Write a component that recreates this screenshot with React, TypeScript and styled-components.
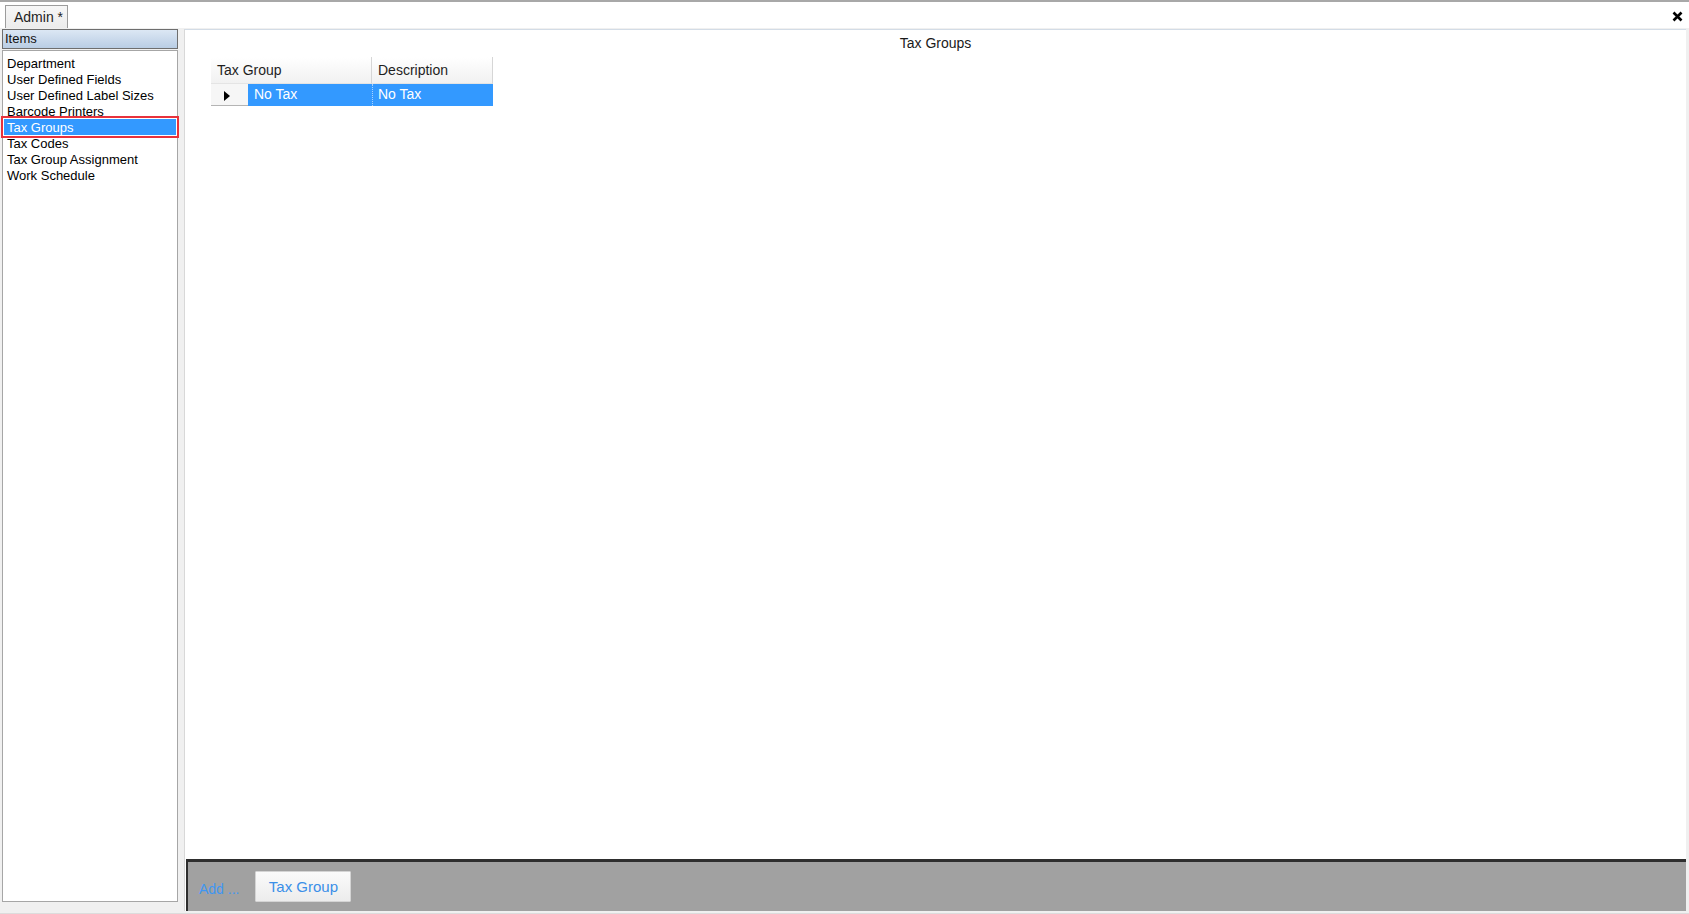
import styled, { createGlobalStyle } from "styled-components";

const GlobalStyle = createGlobalStyle`
  html, body {
    margin: 0;
    padding: 0;
    background: #f0f0f0;
  }
  body {
    font-family: "Liberation Sans", Arial, sans-serif;
    color: #000;
  }
`;

const menuItems = [
  "Department",
  "User Defined Fields",
  "User Defined Label Sizes",
  "Barcode Printers",
  "Tax Groups",
  "Tax Codes",
  "Tax Group Assignment",
  "Work Schedule",
];

const App = () => {
  const selected = "Tax Groups";

  return (
    <>
      <GlobalStyle />
      <Frame>
        <TabStrip>
          <Tab>Admin *</Tab>
          <CloseButton aria-label="Close">
            <svg width="11" height="11" viewBox="0 0 11 11">
              <path d="M1.5 1.5 L9.5 9.5 M9.5 1.5 L1.5 9.5" stroke="#000" strokeWidth="2.6" />
            </svg>
          </CloseButton>
        </TabStrip>

        <Body>
          <LeftPanel>
            <ItemsHeader>Items</ItemsHeader>
            <MenuList>
              {menuItems.map((item) => (
                <MenuItem key={item} $active={item === selected}>
                  {item}
                </MenuItem>
              ))}
            </MenuList>
          </LeftPanel>

          <RightPanel>
            <Content>
              <Title>Tax Groups</Title>
              <Grid>
                <GridRow>
                  <HeaderCell $width={161}>Tax Group</HeaderCell>
                  <HeaderCell $width={121}>Description</HeaderCell>
                </GridRow>
                <GridRow>
                  <RowHeader>
                    <svg width="6" height="10" viewBox="0 0 6 10">
                      <path d="M0 0 L6 5 L0 10 Z" fill="#000" />
                    </svg>
                  </RowHeader>
                  <DataCell $width={124}>No Tax</DataCell>
                  <DataCell $width={121} $divider>
                    No Tax
                  </DataCell>
                </GridRow>
              </Grid>
            </Content>

            <ActionBar>
              <AddLabel>Add ...</AddLabel>
              <ActionButton>Tax Group</ActionButton>
            </ActionBar>
          </RightPanel>
        </Body>
      </Frame>
    </>
  );
};

export default App;

const Frame = styled.div`
  height: 914px;
  display: flex;
  flex-direction: column;
  background: #f0f0f0;
  box-sizing: border-box;
  border-top: 2px solid #a8a8a8;
  overflow: hidden;
`;

const TabStrip = styled.div`
  height: 26px;
  flex: none;
  display: flex;
  justify-content: space-between;
  align-items: flex-end;
  padding: 0 6px 0 5px;
  background: #ffffff;
`;

const Tab = styled.div`
  width: 63px;
  height: 23px;
  box-sizing: border-box;
  padding-left: 8px;
  line-height: 23px;
  font-size: 14px;
  color: #1e1e1e;
  background: linear-gradient(#f7f7f7, #ececec);
  border: 1px solid #9c9c9c;
  border-bottom: none;
`;

const CloseButton = styled.div`
  align-self: center;
  display: flex;
  margin-top: 2px;
`;

const Body = styled.div`
  flex: 1;
  display: flex;
  gap: 6px;
  padding: 1px 3px 2px 2px;
  min-height: 0;
  border-bottom: 1px solid #dcdcdc;
`;

const LeftPanel = styled.div`
  width: 176px;
  display: flex;
  flex-direction: column;
  gap: 1px;
  padding-bottom: 9px;
`;

const ItemsHeader = styled.div`
  height: 20px;
  box-sizing: border-box;
  padding-left: 2px;
  line-height: 18px;
  font-size: 13px;
  color: #111;
  border: 1px solid #6e6e6e;
  background: linear-gradient(#dce7f4, #b9cde4);
`;

const MenuList = styled.div`
  flex: 1;
  background: #ffffff;
  border: 1px solid #a6a6a6;
  padding-top: 4px;
`;

const MenuItem = styled.div<{ $active?: boolean }>`
  height: 16px;
  line-height: 17px;
  padding-left: 3px;
  font-size: 13px;
  white-space: nowrap;
  color: ${({ $active }) => ($active ? "#ffffff" : "#000000")};
  background: ${({ $active }) => ($active ? "#3399ff" : "transparent")};
  outline: ${({ $active }) => ($active ? "2px solid #e8323c" : "none")};
  outline-offset: 1px;
  margin: 0 1px;
`;

const RightPanel = styled.div`
  flex: 1;
  display: flex;
  flex-direction: column;
  background: #ffffff;
  border-top: 1px solid #d3dce6;
  border-left: 1px solid #d8d8d8;
`;

const Content = styled.div`
  flex: 1;
  padding: 5px 0 0 26px;
`;

const Title = styled.div`
  font-size: 14px;
  line-height: 16px;
  color: #1a1a1a;
  text-align: center;
  margin-left: -26px;
`;

const Grid = styled.div`
  margin-top: 6px;
  display: flex;
  flex-direction: column;
`;

const GridRow = styled.div`
  display: flex;
`;

const HeaderCell = styled.div<{ $width: number }>`
  width: ${({ $width }) => $width}px;
  height: 27px;
  box-sizing: border-box;
  padding-left: 6px;
  line-height: 27px;
  font-size: 14px;
  color: #1e1e1e;
  background: linear-gradient(#ffffff, #f1f1f1);
  border-right: 1px solid #d6d6d6;
  border-bottom: 1px solid #e4e4e4;
`;

const RowHeader = styled.div`
  width: 37px;
  height: 22px;
  box-sizing: border-box;
  display: flex;
  align-items: center;
  padding: 2px 0 0 13px;
  background: #f6f6f6;
  border-bottom: 1px solid #b4b4b4;
`;

const DataCell = styled.div<{ $width: number; $divider?: boolean }>`
  width: ${({ $width }) => $width}px;
  height: 22px;
  box-sizing: border-box;
  padding-left: ${({ $divider }) => ($divider ? "5px" : "6px")};
  line-height: 20px;
  font-size: 14px;
  color: #ffffff;
  background: #3399ff;
  border-left: ${({ $divider }) => ($divider ? "1px dotted #a9d2ff" : "none")};
`;

const ActionBar = styled.div`
  height: 52px;
  box-sizing: border-box;
  display: flex;
  align-items: center;
  gap: 16px;
  padding: 0 0 0 11px;
  background: #a1a1a1;
  border-top: 3px solid #2e2e2e;
  border-left: 2px solid #2e2e2e;
  margin-left: 1px;
`;

const AddLabel = styled.span`
  font-size: 14px;
  color: #3f97f2;
  margin-top: 5px;
`;

const ActionButton = styled.button`
  width: 96px;
  height: 31px;
  padding: 0;
  font-family: "Liberation Sans", Arial, sans-serif;
  font-size: 15px;
  color: #3a8fe8;
  background: linear-gradient(#fbfbfb, #ececec);
  border: 1px solid #d4d4d4;
  border-radius: 1px;
  cursor: pointer;
`;
